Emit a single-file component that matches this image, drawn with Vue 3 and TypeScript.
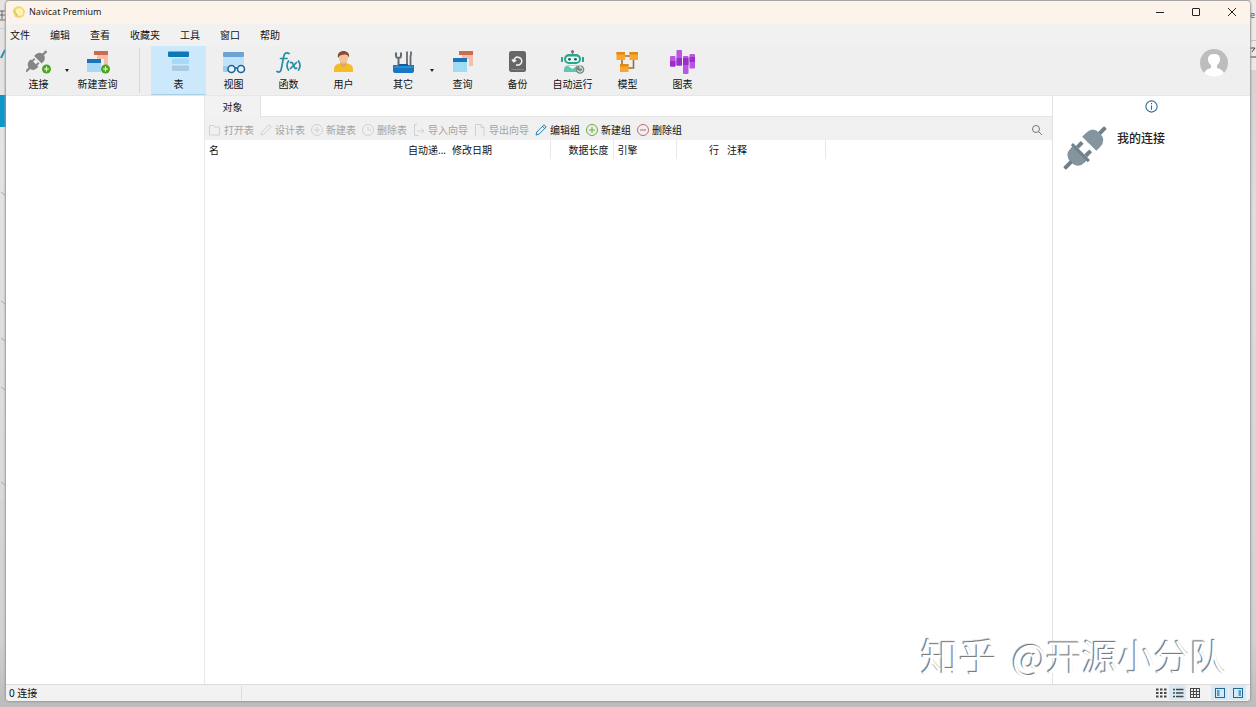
<script setup lang="ts">
import { ref } from 'vue'

interface Tool {
  id: string
  label: string
  wide?: boolean
}

interface ObjectAction {
  id: string
  label: string
  disabled: boolean
}

interface Column {
  label: string
  width?: number
  end?: boolean
  line?: boolean
}

const menus: string[] = ['文件', '编辑', '查看', '收藏夹', '工具', '窗口', '帮助']

const tools: Tool[] = [
  { id: 'table', label: '表' },
  { id: 'view', label: '视图' },
  { id: 'func', label: '函数' },
  { id: 'user', label: '用户' },
  { id: 'other', label: '其它', wide: true },
  { id: 'query', label: '查询' },
  { id: 'backup', label: '备份' },
  { id: 'robot', label: '自动运行' },
  { id: 'model', label: '模型' },
  { id: 'chart', label: '图表' },
]

const actions: ObjectAction[] = [
  { id: 'open', label: '打开表', disabled: true },
  { id: 'pencil', label: '设计表', disabled: true },
  { id: 'add', label: '新建表', disabled: true },
  { id: 'remove', label: '删除表', disabled: true },
  { id: 'import', label: '导入向导', disabled: true },
  { id: 'export', label: '导出向导', disabled: true },
  { id: 'pencilOn', label: '编辑组', disabled: false },
  { id: 'addOn', label: '新建组', disabled: false },
  { id: 'removeOn', label: '删除组', disabled: false },
]

const columns: Column[] = [
  { label: '名', width: 199 },
  { label: '自动递...', width: 44, end: true },
  { label: '修改日期', width: 102, line: true },
  { label: '数据长度', width: 63, end: true, line: true },
  { label: '引擎', width: 63, line: true },
  { label: '行', width: 47, end: true },
  { label: '注释', width: 102, line: true },
  { label: '' },
]

const activeTool = ref('table')

const plus = '<circle cx="20.500" cy="19" r="4.500" fill="#4aa51c"/><path d="M20.500 16.500v5M18 19h5" stroke="#e9ffdc" stroke-width="1.200"/>'

const plug =
  '<g transform="rotate(45 12 12)"><rect x="11" y="-3.500" width="2.400" height="6"/><path d="M6.500 9.500V7a5.700 5.700 0 0 1 11.400 0v2.500z"/><path d="M6.500 14.500h11.400V17a5.700 5.700 0 0 1-11.400 0z"/><rect x="8" y="11.200" width="2" height="4"/><rect x="14.200" y="11.200" width="2" height="4"/><rect x="11" y="21.500" width="2.400" height="6"/></g>'

const queryShape =
  '<path d="M9 1h14v4H9z" fill="#cd6b50"/><path d="M12 5h11v11h-4V9h-7z" fill="#f6bda9"/><path d="M2 9h14v4H2z" fill="#1976b8"/><path d="M2 13h14v9H2z" fill="#a8d8f5"/>'

const icons: Record<string, string> = {
  connect: `<g fill="#858585" transform="translate(-1 0) scale(.93)">${plug}</g>${plus}`,
  newQuery: queryShape + plus,
  table:
    '<rect x="2" y="1.500" width="21" height="5.500" rx="1" fill="#0d78b5"/><rect x="6" y="8.500" width="17" height="5.500" rx="1" fill="#a6d9f6"/><rect x="6" y="15.500" width="17" height="5.500" rx="1" fill="#a9cbe6"/>',
  view:
    '<rect x="2" y="2" width="21" height="5" rx="1" fill="#6da2d3"/><path d="M2 7h21v9H2z" fill="#bfe2fb"/><path d="M2 16h5v6H3.500A1.500 1.500 0 0 1 2 20.500z" fill="#9bcdf1"/><g fill="#eaf6ff" stroke="#17679c" stroke-width="1.600"><circle cx="10.500" cy="19" r="3.500"/><circle cx="20" cy="19" r="3.500"/><path d="M14 18.500q1.200-1.500 2.500 0" fill="none"/></g>',
  func:
    '<g fill="none" stroke="#238da2" stroke-width="1.700" stroke-linecap="round"><path d="M13 3.500c-3-2-5 .5-5.500 4L5.500 18c-.6 3.500-2 5-4.500 3.500M4.500 8.500H11"/><path d="M12.500 11q-3 4.500 0 9M22.500 11q3 4.500 0 9M14.500 12.500q1.500-.8 2.500 1.500l1.500 3.500q1 1.700 2 .7M20.500 12.500l-6 6"/></g>',
  user:
    '<path d="M3 22v-3c0-4 4-6 9.500-6s9.500 2 9.500 6v3z" fill="#f4bd20"/><path d="M9.500 11h6v3a3 3 0 0 1-6 0z" fill="#e3a36f"/><ellipse cx="12.500" cy="8" rx="4.500" ry="5.500" fill="#f3c296"/><path d="M7 8c-1-5 2-7 5.500-7S19 3 18 8q-1-4-4.500-3.500T9 5.500z" fill="#874b38"/>',
  other:
    '<path d="M2 15h21v6q0 2-2 2H4q-2 0-2-2z" fill="#1478c4"/><path d="M3 17h19" stroke="#43a3df"/><path d="M5 2.500v3q0 2.500 2.500 2.500T10 5.500v-3M7.500 8v8" fill="none" stroke="#606c73" stroke-width="2"/><path d="M16 1.500v14M20 1.500v3l-.5 2v9" fill="none" stroke="#606c73" stroke-width="1.800"/><path d="M8 15h9" stroke="#0c5da4" stroke-width="2"/>',
  query:
    '<path d="M9 1h14v4H9z" fill="#cd6b50"/><path d="M12 5h11v11h-4V9h-7z" fill="#f6bda9"/><path d="M3 8h14v4H3z" fill="#1976b8"/><path d="M3 12h14v10H3z" fill="#9edcf5"/>',
  backup:
    '<rect x="4" y="1" width="17" height="21" rx="2.500" fill="#666"/><path d="M8.800 11.500a4 4 0 1 1 2.200 3.200M7 9.500l1.800 2.200 2.400-1.500" fill="none" stroke="#f5f5f5" stroke-width="1.500"/><path d="M6 19.500h13" stroke="#888"/>',
  robot:
    '<path d="M12.500 4V1" stroke="#28a188" stroke-width="1.500"/><circle cx="12.500" cy="1.500" r="1.500" fill="#8a6572"/><rect x="4" y="4" width="17" height="10" rx="5" fill="#2ca58c"/><path d="M2 7v5M23 7v5" stroke="#2ca58c" stroke-width="2"/><rect x="6" y="6.500" width="13" height="5.500" rx="2.700" fill="#e4f7f3"/><circle cx="9.500" cy="9.200" r="1.300" fill="#17564b"/><circle cx="15.500" cy="9.200" r="1.300" fill="#17564b"/><path d="M4 22q-1-6 4-6.500h9q4 1 4 6.500z" fill="#66c5b2"/><path d="m8 16 4.500 3 4-3" fill="#e8fffa"/><circle cx="20" cy="19.500" r="4.300" fill="#768c8a"/><path d="M17.500 20a2.500 2.500 0 1 0 2.500-3M20 15.500v3" fill="none" stroke="#e7f2f0"/>',
  model:
    '<path d="M9 6h7M18.500 9v9H12M7 10v5" fill="none" stroke="#98713d" stroke-width="1.600"/><g fill="#f8a62c"><rect x="1.500" y="2" width="8.500" height="8"/><rect x="14.500" y="2" width="8.500" height="8"/><rect x="5" y="14" width="8.500" height="8"/></g><path d="M1.500 2H10v2.500H1.500zM14.500 2H23v2.500h-8.500zM5 14h8.500v2.500H5z" fill="#df8a18"/>',
  chart:
    '<g fill="#b955e2"><rect x="0" y="6" width="5.500" height="11" rx="1"/><rect x="6.500" y="0" width="5.500" height="16" rx="1"/><rect x="13" y="6" width="5.500" height="18" rx="1"/><rect x="19.500" y="4" width="5.500" height="14.500" rx="1"/></g><path d="M0 11h5.500v5H0zM6.500 8H12v7H6.500zM13 8h5.500v7H13zM19.500 7H25v5h-5.500z" fill="#9a2fc9"/>',
}

const smallIcons: Record<string, string> = {
  open: '<path d="M.5 11V1.500h4l1 1.500h5v8z"/>',
  pencil: '<path d="m1 11 .8-3L9 .8 11.200 3 4 10.200z"/>',
  add: '<circle cx="6" cy="6" r="5.500"/><path d="M6 3v6M3 6h6"/>',
  remove: '<circle cx="6" cy="6" r="5.500"/><path d="M6 3v3h3"/>',
  import: '<path d="M4 .5H1.500v11h4M4 7h7M8.500 4.500 11 7 8.500 9.500"/>',
  export: '<path d="M1.500 11.500V.5H7l3 3M7 .5v3h3v8"/>',
  pencilOn: '<g stroke="#217fa6"><path d="m1 11 .8-3L9 .8 11.200 3 4 10.200z"/><path d="M7.500 2.300 9.700 4.500"/></g>',
  addOn: '<g stroke="#68a83a"><circle cx="6" cy="6" r="5.500"/><path d="M6 3v6M3 6h6"/></g>',
  removeOn: '<g stroke="#bf6972"><circle cx="6" cy="6" r="5.500"/><path d="M3 6h6"/></g>',
}
</script>

<template>
  <div class="desktop">
    <svg class="behind-left" viewBox="0 0 6 500" aria-hidden="true">
      <path d="M0 11h5M2 11v8M0 15h5M0 20h6" stroke="#666" />
      <path d="M0 28.500h6" stroke="#ccc" />
      <path d="m1 58 4-8" stroke="#1b93b8" stroke-width="2" />
      <path d="M0 95h6v32H0z" fill="#0b97c8" />
      <path d="m1 192 4 3m-4 106 4 3m-4 34 4 3m-4 46 4 3m-4 92 4 3" stroke="#aaa" />
    </svg>
    <div class="behind-right">
      <span>e</span>
      <svg viewBox="0 0 6 20" aria-hidden="true">
        <path d="M0 .5h6" stroke="#c4c4c4" />
        <path d="M0 8h5l-3 4M0 17h6" stroke="#444" />
      </svg>
    </div>
    <div class="window">
      <header class="titlebar">
        <svg class="logo" viewBox="0 0 14 14">
          <path d="M2 3 6 1l4 1 3 4-1 5-4 2-5-1-2-5z" fill="#f0d873" />
          <path d="m4 4 4-1 3 2v5l-4 1-3-3z" fill="#fff3a9" />
          <path d="M1 5.500 4 8l1 4" fill="none" stroke="#cfbf7c" />
        </svg>
        <h1>Navicat Premium</h1>
        <div class="window-buttons">
          <button type="button" aria-label="最小化"><svg viewBox="0 0 10 10"><path d="M1 5.500h8" /></svg></button>
          <button type="button" aria-label="最大化"><svg viewBox="0 0 10 10"><rect x="1.500" y="1.500" width="7" height="7" rx=".5" /></svg></button>
          <button type="button" aria-label="关闭"><svg viewBox="0 0 10 10"><path d="m1 1 8 8M9 1 1 9" /></svg></button>
        </div>
      </header>

      <nav class="menubar">
        <button v-for="menu in menus" :key="menu" type="button">{{ menu }}</button>
      </nav>

      <div class="ribbon">
        <button type="button" class="tool connect">
          <svg viewBox="0 0 25 25" v-html="icons.connect"></svg>
          <span>连接</span>
        </button>
        <button type="button" class="arrow" aria-label="连接类型"></button>
        <button type="button" class="tool">
          <svg viewBox="0 0 25 25" v-html="icons.newQuery"></svg>
          <span>新建查询</span>
        </button>
        <div class="divider"></div>
        <template v-for="tool in tools" :key="tool.id">
          <button
            type="button"
            class="tool"
            :class="{ active: activeTool === tool.id, wide: tool.wide }"
            @click="activeTool = tool.id"
          >
            <svg viewBox="0 0 25 25" v-html="icons[tool.id]"></svg>
            <span>{{ tool.label }}</span>
          </button>
          <button v-if="tool.wide" type="button" class="arrow" aria-label="更多对象"></button>
        </template>
        <button type="button" class="avatar" aria-label="账户">
          <svg viewBox="0 0 28 28">
            <circle cx="14" cy="14" r="14" fill="#bdbdbd" />
            <path d="M4 24q2-4 7-5v-3q-3-2-3-6 0-5 6-5t6 5q0 4-3 6v3q5 1 7 5-4 4-10 4T4 24z" fill="#fff" />
          </svg>
        </button>
      </div>

      <div class="body">
        <aside class="tree" aria-label="连接列表"></aside>

        <main class="objects">
          <div class="tabs">
            <button type="button" class="tab">对象</button>
            <div class="tab-space"></div>
          </div>
          <div class="actions">
            <button v-for="action in actions" :key="action.id" type="button" :disabled="action.disabled">
              <svg viewBox="0 0 12 12" v-html="smallIcons[action.id]"></svg>
              <span>{{ action.label }}</span>
            </button>
            <button type="button" class="search" aria-label="搜索">
              <svg viewBox="0 0 12 12"><circle cx="5" cy="5" r="3.500" /><path d="m7.500 7.500 3.500 3.500" /></svg>
            </button>
          </div>
          <table>
            <colgroup>
              <col v-for="(column, i) in columns" :key="i" :style="column.width ? { width: column.width + 'px' } : {}" />
            </colgroup>
            <thead>
              <tr>
                <th v-for="(column, i) in columns" :key="i" scope="col" :class="{ end: column.end, line: column.line }">
                  {{ column.label }}
                </th>
              </tr>
            </thead>
          </table>
        </main>

        <aside class="info">
          <button type="button" class="info-tab" aria-label="信息">
            <svg viewBox="0 0 12 12"><circle cx="6" cy="6" r="5.200" /><path d="M6 5v4M6 2.800v1.200" /></svg>
          </button>
          <div class="info-body">
            <svg viewBox="0 0 46 46">
              <g transform="rotate(45 23 23)" fill="#8495a0">
                <rect x="21" y="-6" width="4" height="10" rx="1" fill="#6e808b" />
                <path d="M13 17v-5q0-10 10-10t10 10v5z" />
                <path d="M13 29h20v4q0 10-10 10T13 33z" />
                <path d="M11 28h24v3H11z" fill="#71828c" />
                <rect x="15" y="21" width="4" height="7" fill="#71828c" />
                <rect x="27" y="21" width="4" height="7" fill="#71828c" />
                <rect x="21" y="42" width="4" height="10" rx="1" fill="#6e808b" />
              </g>
            </svg>
            <h2>我的连接</h2>
          </div>
        </aside>
      </div>

      <footer class="statusbar">
        <span class="count">0 连接</span>
        <div class="views">
          <button type="button" aria-label="图标">
            <svg viewBox="0 0 12 12"><path d="M1 2.500h2.500M5 2.500h2.500M9 2.500h2.500M1 6h2.500M5 6h2.500M9 6h2.500M1 9.500h2.500M5 9.500h2.500M9 9.500h2.500" stroke-width="2" /></svg>
          </button>
          <button type="button" class="on" aria-label="列表">
            <svg viewBox="0 0 12 12"><path d="M1 2.500h2M4 2.500h7.500M1 6h2M4 6h7.500M1 9.500h2M4 9.500h7.500" stroke-width="1.500" /></svg>
          </button>
          <button type="button" aria-label="详细信息">
            <svg viewBox="0 0 12 12"><path d="M1 1.500h10M1 4.500h10M1 7.500h10M1 10.500h10M1.500 1v10M4.500 1v10M7.500 1v10M10.500 1v10" /></svg>
          </button>
          <button type="button" class="on pane" aria-label="导航窗格">
            <svg viewBox="0 0 12 12"><rect x="1.500" y="1.500" width="9" height="9" /><path d="M3 3h2.500v6H3z" class="fill" /></svg>
          </button>
          <button type="button" class="on pane-end" aria-label="信息窗格">
            <svg viewBox="0 0 12 12"><rect x="1.500" y="1.500" width="9" height="9" /><path d="M6.500 3H9v6H6.500z" class="fill" /></svg>
          </button>
        </div>
      </footer>
    </div>
    <div class="watermark"><b>知乎</b><span>@开源小分队</span></div>
  </div>
</template>

<style>
body {
  margin: 0;
}
</style>

<style scoped>
* {
  box-sizing: border-box;
}

.desktop {
  position: relative;
  display: flex;
  height: 100vh;
  padding: 1px 6px 6px;
  overflow: hidden;
  background: linear-gradient(#d0cecb, #dedede 30%, #d2d2d2 90%, #bcbcbc);
  color: #111;
  font: 10px/14px "Noto Sans", "Noto Sans CJK SC", sans-serif;
}

button {
  margin: 0;
  padding: 0;
  border: 0;
  background: none;
  color: inherit;
  font: inherit;
  white-space: nowrap;
}

svg {
  display: block;
  flex: none;
  fill: none;
}

.behind-left {
  position: absolute;
  top: 0;
  left: 0;
  width: 6px;
  height: 500px;
  background: linear-gradient(#e6e3e0, #e2e4e6 30%, #dadada);
}

.behind-right {
  position: absolute;
  top: 0;
  right: 0;
  width: 6px;
  height: 70px;
  padding-top: 8px;
  background: #ece9e6;
  color: #555;
}

.behind-right span {
  display: block;
  font-size: 9px;
}

.behind-right svg {
  width: 6px;
  height: 20px;
  margin-top: 18px;
}

.window {
  position: relative;
  display: flex;
  flex: 1;
  flex-direction: column;
  min-width: 0;
  background: #fff;
  border-radius: 4px;
  box-shadow: 0 0 2px 1px #999;
  overflow: hidden;
}

.titlebar {
  display: flex;
  align-items: center;
  height: 23px;
  padding: 0 0 1px 6px;
  background: #fcf4ea;
}

.logo {
  width: 14px;
  height: 14px;
}

h1 {
  margin: 0 0 0 3px;
  color: #222;
  font: 9px/14px "Noto Sans", sans-serif;
}

.window-buttons {
  display: flex;
  margin-left: auto;
}

.window-buttons button {
  display: grid;
  place-items: center;
  width: 36px;
  height: 22px;
}

.window-buttons svg {
  width: 10px;
  height: 10px;
  stroke: #222;
}

.menubar {
  display: flex;
  gap: 20px;
  height: 22px;
  padding-left: 4px;
  background: #f1f1f1;
}

.ribbon {
  display: flex;
  height: 50px;
  padding-left: 8px;
  background: #efefef;
  border-bottom: 1px solid #e6e6e6;
}

.tool {
  display: flex;
  flex-direction: column;
  align-items: center;
  gap: 2px;
  width: 55px;
  padding-top: 4px;
}

.tool svg {
  width: 25px;
  height: 25px;
}

.connect {
  width: 49px;
}

.wide {
  width: 50px;
  margin-left: 7px;
}

.active {
  background: #cce8fb;
  border-bottom: 1px solid #a8cfe8;
}

.arrow {
  display: grid;
  place-items: center;
  width: 7px;
  height: 48px;
}

.arrow::before {
  content: "";
  border: 2px solid transparent;
  border-top: 3px solid #222;
  border-bottom: 0;
}

.divider {
  width: 1px;
  margin: 2px 11px 2px 14px;
  background: #d8d8d8;
}

.avatar {
  margin: 0 22px 0 auto;
}

.avatar svg {
  width: 28px;
  height: 28px;
  margin-bottom: 16px;
}

.body {
  display: flex;
  flex: 1;
  min-height: 0;
}

.tree {
  width: 199px;
  border-right: 1px solid #e8e8e8;
}

.objects {
  flex: 1;
  min-width: 0;
}

.tabs {
  display: flex;
  height: 21px;
  background: #f2f2f2;
}

.tab {
  width: 55px;
}

.tab-space {
  flex: 1;
  background: #fff;
  border-left: 1px solid #e2e2e2;
  border-bottom: 1px solid #e6e6e6;
}

.actions {
  display: flex;
  gap: 6px;
  height: 23px;
  padding: 3px 9px 0 4px;
  background: #f0f0f0;
}

.actions button {
  display: flex;
  align-items: center;
  gap: 3px;
}

.actions button:disabled {
  color: #a3a3a3;
}

.actions svg {
  width: 12px;
  height: 12px;
  stroke: #d0d0d0;
}

.actions .search {
  margin-left: auto;
}

.search svg {
  stroke: #777;
}

table {
  width: 100%;
  border-collapse: collapse;
  table-layout: fixed;
}

th {
  height: 19px;
  padding: 0 4px;
  font-weight: 400;
  text-align: left;
  white-space: nowrap;
}

th.end {
  text-align: right;
}

th.line {
  border-right: 1px solid #e8e8e8;
}

.info {
  width: 198px;
  border-left: 1px solid #e2e2e2;
}

.info-tab {
  display: grid;
  place-items: center;
  width: 100%;
  height: 20px;
}

.info-tab svg {
  width: 13px;
  height: 13px;
  stroke: #24709a;
}

.info-body {
  display: flex;
  gap: 9px;
  padding: 9px 9px 0;
}

.info-body svg {
  width: 46px;
  height: 46px;
}

h2 {
  margin: 4px 0 0;
  color: #222;
  font-size: 12px;
  font-weight: 500;
  line-height: 20px;
}

.statusbar {
  display: flex;
  align-items: center;
  height: 17px;
  padding: 0 0 1px 3px;
  background: #f2f2f2;
  border-top: 1px solid #dcdcdc;
}

.count {
  width: 233px;
  border-right: 1px solid #dcdcdc;
}

.views {
  display: flex;
  margin-left: auto;
  padding-right: 4px;
}

.views button {
  display: grid;
  place-items: center;
  width: 17px;
  height: 15px;
}

.views svg {
  width: 12px;
  height: 12px;
  stroke: #454545;
}

.views .on {
  background: #d5eaf7;
}

.views .pane {
  margin-left: 8px;
}

.views .pane-end {
  margin-left: 1px;
}

.views .pane svg,
.views .pane-end svg {
  stroke: #226a96;
}

.views .fill {
  fill: #5d9cc2;
  stroke: none;
}

.watermark {
  position: absolute;
  right: 30px;
  bottom: 26px;
  display: flex;
  align-items: baseline;
  gap: 15px;
  color: #fff;
  font: 36px/52px "Noto Sans CJK SC", sans-serif;
  text-shadow: -1px -1px 1px #777, -1px -1px 1px #aaa;
  pointer-events: none;
}

.watermark b {
  font-size: 38px;
  font-weight: 400;
}
</style>
